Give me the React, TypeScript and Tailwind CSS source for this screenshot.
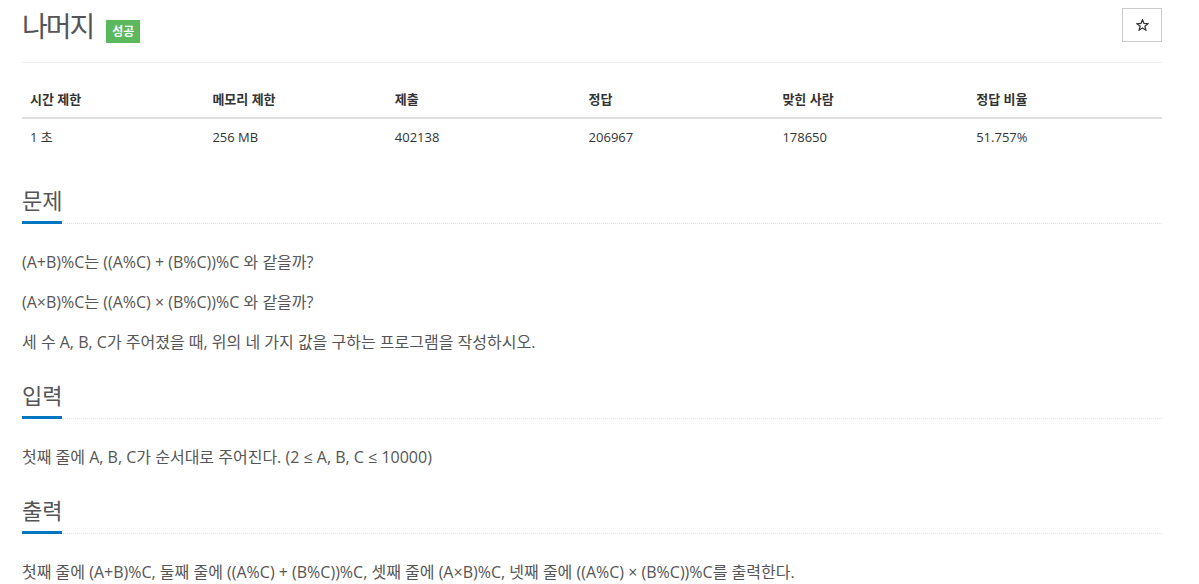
import React from 'react'

const font = { fontFamily: '"Open Sans", "Noto Sans CJK KR", sans-serif' }

const stats = [
  { label: '시간 제한', value: '1 초', w: 'w-[16%]' },
  { label: '메모리 제한', value: '256 MB', w: 'w-[16%]' },
  { label: '제출', value: '402138', w: 'w-[17%]' },
  { label: '정답', value: '206967', w: 'w-[17%]' },
  { label: '맞힌 사람', value: '178650', w: 'w-[17%]' },
  { label: '정답 비율', value: '51.757%', w: 'w-[17%]' },
]

function Section({ title, paragraphs }: { title: string; paragraphs: string[] }) {
  return (
    <section>
      <div className="flex border-b border-dotted border-[#e3e3e3]">
        <h2 className="text-[22px] leading-[26px] font-normal text-[#555] pt-[2px] pb-[8px] border-b-[3px] border-[#0076c0] -mb-px">
          {title}
        </h2>
      </div>
      <div className="mt-[23px] space-y-[10px]">
        {paragraphs.map((p) => (
          <p key={p} className="text-[16px] leading-[30px] text-[#555]">
            {p}
          </p>
        ))}
      </div>
    </section>
  )
}

export default function App() {
  return (
    <div className="min-h-screen bg-white pl-[22px]" style={font}>
      <div className="w-[1140px]">
        {/* Header */}
        <div className="flex items-start justify-between h-[63px] border-b border-[#eee]">
          <div className="flex items-start mt-[8px]">
            <h1 className="text-[28px] leading-[36px] tracking-[-2px] font-normal text-[#555]">나머지</h1>
            <span className="ml-[13px] mt-[12px] h-[23px] w-[34px] flex items-center justify-center bg-[#5cb85c] text-white text-[12px] font-bold">
              성공
            </span>
          </div>
          <button className="mt-[8px] w-[40px] h-[34px] border border-[#ccc] bg-white flex items-center justify-center">
            <svg width="13" height="12" viewBox="0 0 24 23" fill="none" stroke="#333" strokeWidth="2.4" strokeLinejoin="miter">
              <polygon points="12,1.5 14.9,8.6 22.5,9.1 16.6,14 18.5,21.4 12,17.3 5.5,21.4 7.4,14 1.5,9.1 9.1,8.6" />
            </svg>
          </button>
        </div>

        {/* Stats table */}
        <div className="mt-[18px]">
          <div className="flex border-b-2 border-[#ddd]">
            {stats.map((s) => (
              <div key={s.label} className={`${s.w} px-[8px] py-[8px] text-[13px] leading-[20px] font-bold text-[#333]`}>
                {s.label}
              </div>
            ))}
          </div>
          <div className="flex">
            {stats.map((s) => (
              <div key={s.label} className={`${s.w} px-[8px] py-[8px] text-[13px] leading-[20px] text-[#333]`}>
                {s.value}
              </div>
            ))}
          </div>
        </div>

        <div className="mt-[30px] space-y-[23px]">
          <Section
            title="문제"
            paragraphs={[
              '(A+B)%C는 ((A%C) + (B%C))%C 와 같을까?',
              '(A×B)%C는 ((A%C) × (B%C))%C 와 같을까?',
              '세 수 A, B, C가 주어졌을 때, 위의 네 가지 값을 구하는 프로그램을 작성하시오.',
            ]}
          />
          <Section title="입력" paragraphs={['첫째 줄에 A, B, C가 순서대로 주어진다. (2 ≤ A, B, C ≤ 10000)']} />
          <Section
            title="출력"
            paragraphs={[
              '첫째 줄에 (A+B)%C, 둘째 줄에 ((A%C) + (B%C))%C, 셋째 줄에 (A×B)%C, 넷째 줄에 ((A%C) × (B%C))%C를 출력한다.',
            ]}
          />
        </div>
      </div>
    </div>
  )
}
